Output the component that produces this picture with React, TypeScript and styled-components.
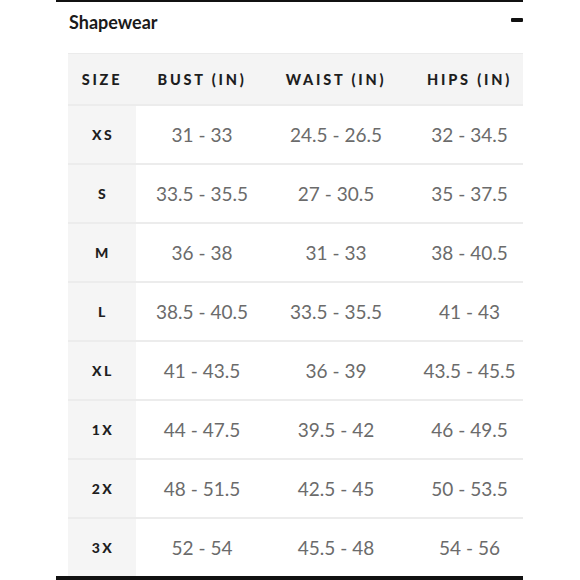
import React from "react";
import styled, { createGlobalStyle } from "styled-components";

const Global = createGlobalStyle`
  html, body { margin: 0; padding: 0; background: #fff; }
  body { width: 580px; height: 580px; overflow: hidden; }
`;

const Frame = styled.div`
  width: 467px;
  height: 580px;
  margin-left: 56px;
  border-top: 2px solid #111;
  box-sizing: border-box;
  display: flex;
  flex-direction: column;
  position: relative;
  overflow: hidden;
`;

const TitleBar = styled.div`
  height: 51px;
  display: flex;
  align-items: flex-start;
  justify-content: space-between;
  padding-left: 13px;
  padding-top: 9px;
  box-sizing: border-box;
`;

const Title = styled.h2`
  margin: 0;
  font-family: "Lato", sans-serif;
  font-weight: 700;
  font-size: 18px;
  line-height: 22px;
  color: #1a1a1a;
  letter-spacing: 0;
`;

const Dash = styled.span`
  width: 12px;
  height: 4px;
  border-radius: 1px;
  background: #111;
  margin-top: 7px;
`;

const Table = styled.div`
  margin-left: 12px;
  width: 455px;
  display: flex;
  flex-direction: column;
`;

const Row = styled.div<{ $head?: boolean }>`
  display: grid;
  grid-template-columns: 68px 132px 136px 119px;
  height: ${(p) => (p.$head ? "50px" : "57px")};
  background: ${(p) => (p.$head ? "#f4f4f4" : "#fff")};
  border-top: ${(p) => (p.$head ? "1px solid #ebebeb" : "none")};
  border-bottom: 2px solid #ececec;
`;

const HeadCell = styled.div<{ $shift?: number }>`
  display: flex;
  align-items: center;
  justify-content: center;
  padding-left: ${(p) => p.$shift ?? 0}px;
  font-family: "Lato", sans-serif;
  font-weight: 900;
  font-size: 14.5px;
  letter-spacing: 2.8px;
  color: #1e1e1e;
  white-space: nowrap;
`;

const SizeCell = styled.div`
  display: flex;
  align-items: center;
  justify-content: center;
  background: #f5f5f5;
  font-family: "Lato", sans-serif;
  font-weight: 900;
  font-size: 14px;
  letter-spacing: 2.5px;
  padding-left: 2px;
  color: #1e1e1e;
`;

const ValueCell = styled.div<{ $shift?: number }>`
  display: flex;
  align-items: center;
  justify-content: center;
  padding-left: ${(p) => p.$shift ?? 0}px;
  font-family: "Lato", sans-serif;
  font-weight: 400;
  font-size: 19px;
  color: #6b6b6b;
  white-space: nowrap;
`;

const BottomBar = styled.div`
  position: absolute;
  left: 0;
  right: 0;
  bottom: 0;
  height: 4px;
  background: #111;
`;

const rows: [string, string, string, string][] = [
  ["XS", "31 - 33", "24.5 - 26.5", "32 - 34.5"],
  ["S", "33.5 - 35.5", "27 - 30.5", "35 - 37.5"],
  ["M", "36 - 38", "31 - 33", "38 - 40.5"],
  ["L", "38.5 - 40.5", "33.5 - 35.5", "41 - 43"],
  ["XL", "41 - 43.5", "36 - 39", "43.5 - 45.5"],
  ["1X", "44 - 47.5", "39.5 - 42", "46 - 49.5"],
  ["2X", "48 - 51.5", "42.5 - 45", "50 - 53.5"],
  ["3X", "52 - 54", "45.5 - 48", "54 - 56"],
];

export default function App() {
  return (
    <>
      <Global />
      <Frame>
        <TitleBar>
          <Title>Shapewear</Title>
          <Dash />
        </TitleBar>
        <Table>
          <Row $head>
            <HeadCell>SIZE</HeadCell>
            <HeadCell>BUST (IN)</HeadCell>
            <HeadCell>WAIST (IN)</HeadCell>
            <HeadCell $shift={12}>HIPS (IN)</HeadCell>
          </Row>
          {rows.map(([s, b, w, h]) => (
            <Row key={s}>
              <SizeCell>{s}</SizeCell>
              <ValueCell>{b}</ValueCell>
              <ValueCell>{w}</ValueCell>
              <ValueCell $shift={12}>{h}</ValueCell>
            </Row>
          ))}
        </Table>
        <BottomBar />
      </Frame>
    </>
  );
}
